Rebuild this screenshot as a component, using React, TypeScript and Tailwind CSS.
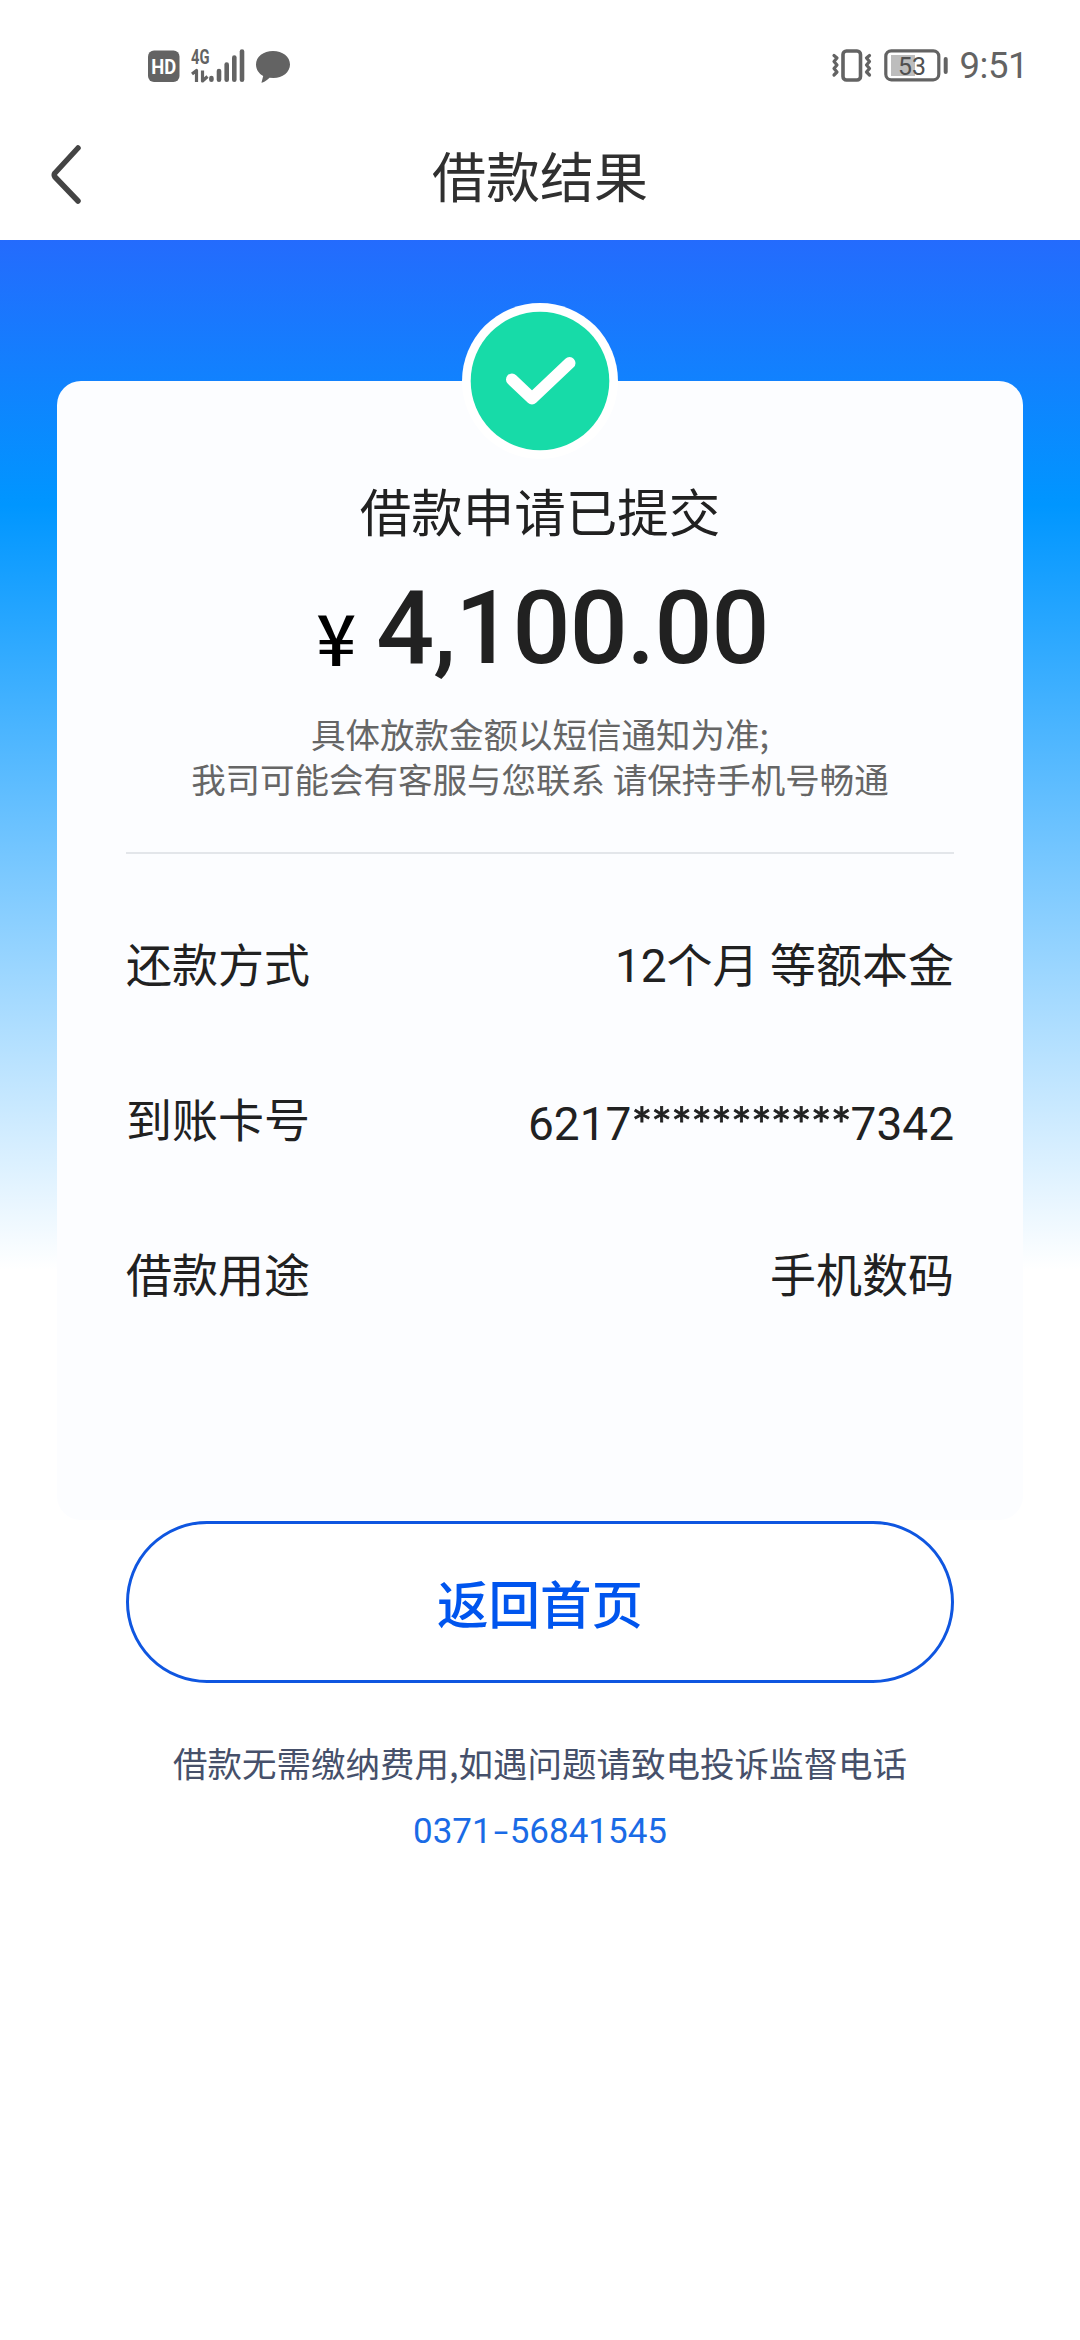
const details = [
  { label: "还款方式", value: "12个月 等额本金" },
  { label: "到账卡号", value: "6217***********7342" },
  { label: "借款用途", value: "手机数码" }
];

function StatusBar() {
  return (
    <div className="flex h-[110px] items-end justify-between pr-[52px] pl-[148px] pb-[26px] text-[#636363]">
      <svg width="144" height="48" viewBox="0 -12 144 48" fill="currentColor">
        <rect x="0" y="2.5" width="31.5" height="31.5" rx="6" />
        <text x="15.7" y="25.5" textAnchor="middle" fill="#fff" fontSize="20.5" fontWeight="700" textLength="25" lengthAdjust="spacingAndGlyphs" fontFamily="Roboto, sans-serif">
          HD
        </text>
        <text x="43" y="15.8" fontSize="20.5" fontWeight="700" textLength="18.5" lengthAdjust="spacingAndGlyphs" fontFamily="Roboto, sans-serif">
          4G
        </text>
        <g fill="none" stroke="currentColor" strokeWidth="3.2" strokeLinejoin="round">
          <path d="M44 26 L48.5 22.5 V34" />
          <path d="M54.5 22.5 V33 L59.5 28.5" />
        </g>
        <g fill="none" stroke="currentColor" strokeWidth="4.6" strokeLinecap="round">
          <path d="M63.4 30 V31.8" />
          <path d="M71 23 V31.8" />
          <path d="M78.7 16.5 V31.8" />
          <path d="M86.3 9.5 V31.8" />
          <path d="M94 3.5 V31.8" />
        </g>
        <path d="M125 3 C134.5 3 142 8.8 142 16.4 C142 24 134.5 30 125.5 30 L121.5 29.8 C119.5 32 117 33.6 114.5 34.6 C113.6 34.9 113.3 34.4 113.7 33.7 L115.2 28 C110.8 25.5 108 21.3 108 16.4 C108 8.8 115.5 3 125 3 Z" />
      </svg>
      <div className="flex items-center">
        <svg width="118" height="36" viewBox="0 0 118 36" fill="none" stroke="currentColor">
          <rect x="12" y="4" width="17.5" height="29" rx="3.5" strokeWidth="3.6" />
          <g strokeWidth="3.2" strokeLinecap="round" strokeLinejoin="round">
            <path d="M3 8.5 L6 11 L3 14.5 L6 18 L3 21.5 L6 25 L3 28" />
            <path d="M38.5 8.5 L35.5 11 L38.5 14.5 L35.5 18 L38.5 21.5 L35.5 25 L38.5 28" />
          </g>
          <rect x="60" y="8" width="24" height="21" fill="#bdbdbd" stroke="none" />
          <rect x="54.8" y="3.8" width="53" height="29" rx="5.5" strokeWidth="3.2" />
          <path d="M114.7 12 V25" strokeWidth="4" strokeLinecap="round" />
          <text x="67" y="28" fill="#505050" stroke="none" fontSize="26.5" textLength="28" lengthAdjust="spacingAndGlyphs" fontFamily="Roboto, sans-serif">
            53
          </text>
        </svg>
        <span className="ml-[11px] pt-[3px] font-['Roboto',sans-serif] text-[36.5px] leading-9 tracking-[-0.5px]">9:51</span>
      </div>
    </div>
  );
}

function Header() {
  return (
    <header className="grid h-[130px] grid-cols-[1fr_auto_1fr] items-center text-[#303030]">
      <button type="button" className="pl-[48px]">
        <svg width="36" height="64" viewBox="0 0 36 64" fill="none" stroke="#444" strokeWidth="5.5" strokeLinecap="round" strokeLinejoin="round">
          <path d="M30 5 L7 30 Q5.5 32 7 34 L30 58" />
        </svg>
      </button>
      <h1 className="text-[54px] leading-none">借款结果</h1>
    </header>
  );
}

function SuccessBadge() {
  return (
    <svg className="-mt-[78px]" width="156" height="156" viewBox="0 0 156 156">
      <circle cx="78" cy="78" r="78" fill="#fff" />
      <circle cx="78" cy="78" r="69.3" fill="#17dba8" />
      <path d="M50 76.5 L70 95.5 L107.5 60" fill="none" stroke="#fff" strokeWidth="12" strokeLinecap="round" strokeLinejoin="round" />
    </svg>
  );
}

// The masked run of a card number gets its own face and tracking.
function DetailValue({ value }: { value: string }) {
  return (
    <dd>
      {value.split(/(\*+)/).map((part, index) =>
        part.startsWith("*") ? (
          <span key={index} className="relative top-[3px] font-['Lato',sans-serif] text-[49px] tracking-[-0.9px] [-webkit-text-stroke:0.8px_#212121]">
            {part}
          </span>
        ) : (
          <span key={index}>{part}</span>
        )
      )}
    </dd>
  );
}

export default function App() {
  return (
    <main className="flex h-[2340px] w-[1080px] flex-col overflow-hidden bg-white font-['Noto_Sans_CJK_SC',sans-serif] text-[#212121]">
      <StatusBar />
      <Header />
      <div className="flex grow flex-col items-center bg-[linear-gradient(180deg,#246bfd_0px,#0096ff_265px,#ffffff_1030px)] pt-[141px]">
        <section className="flex h-[1139px] w-[966px] flex-col items-center rounded-[24px] bg-[#fcfdff] px-[69px]">
          <SuccessBadge />
          <h2 className="mt-[23px] text-[51.5px] leading-[56px]">借款申请已提交</h2>
          <div className="mt-[35px] flex items-baseline pl-[5px] leading-[110px]">
            <span className="relative top-[3px] mr-[20px] text-[70px] leading-[110px] font-medium text-black">¥</span>
            <span className="font-['Roboto',sans-serif] text-[102px] font-medium tracking-[-0.8px]">4,100.00</span>
          </div>
          <p className="mt-[23px] text-center text-[34.5px] leading-[45px] text-[#666]">
            具体放款金额以短信通知为准;
            <br />
            我司可能会有客服与您联系 请保持手机号畅通
          </p>
          <dl className="mt-[51px] w-full border-t-2 border-[#e3e6ea] pt-[35px]">
            {details.map((item) => (
              <div
                key={item.label}
                className="flex h-[155px] items-center justify-between font-['Roboto','Noto_Sans_CJK_SC',sans-serif] text-[46px]"
              >
                <dt>{item.label}</dt>
                <DetailValue value={item.value} />
              </div>
            ))}
          </dl>
        </section>
        <button
          type="button"
          className="mt-px h-[162px] w-[828px] rounded-full border-[3px] border-[#0f56e0] bg-white text-[51.5px] font-medium text-[#0055ee]"
        >
          返回首页
        </button>
        <p className="mt-[54px] text-[34.5px] leading-[50px] text-[#46506a]">借款无需缴纳费用,如遇问题请致电投诉监督电话</p>
        <a className="mt-[20px] font-['Roboto',sans-serif] text-[35px] leading-[50px] text-[#1a6be6]">
          0371<span className="inline-block w-[18px] scale-x-150 text-center">-</span>56841545
        </a>
      </div>
    </main>
  );
}
